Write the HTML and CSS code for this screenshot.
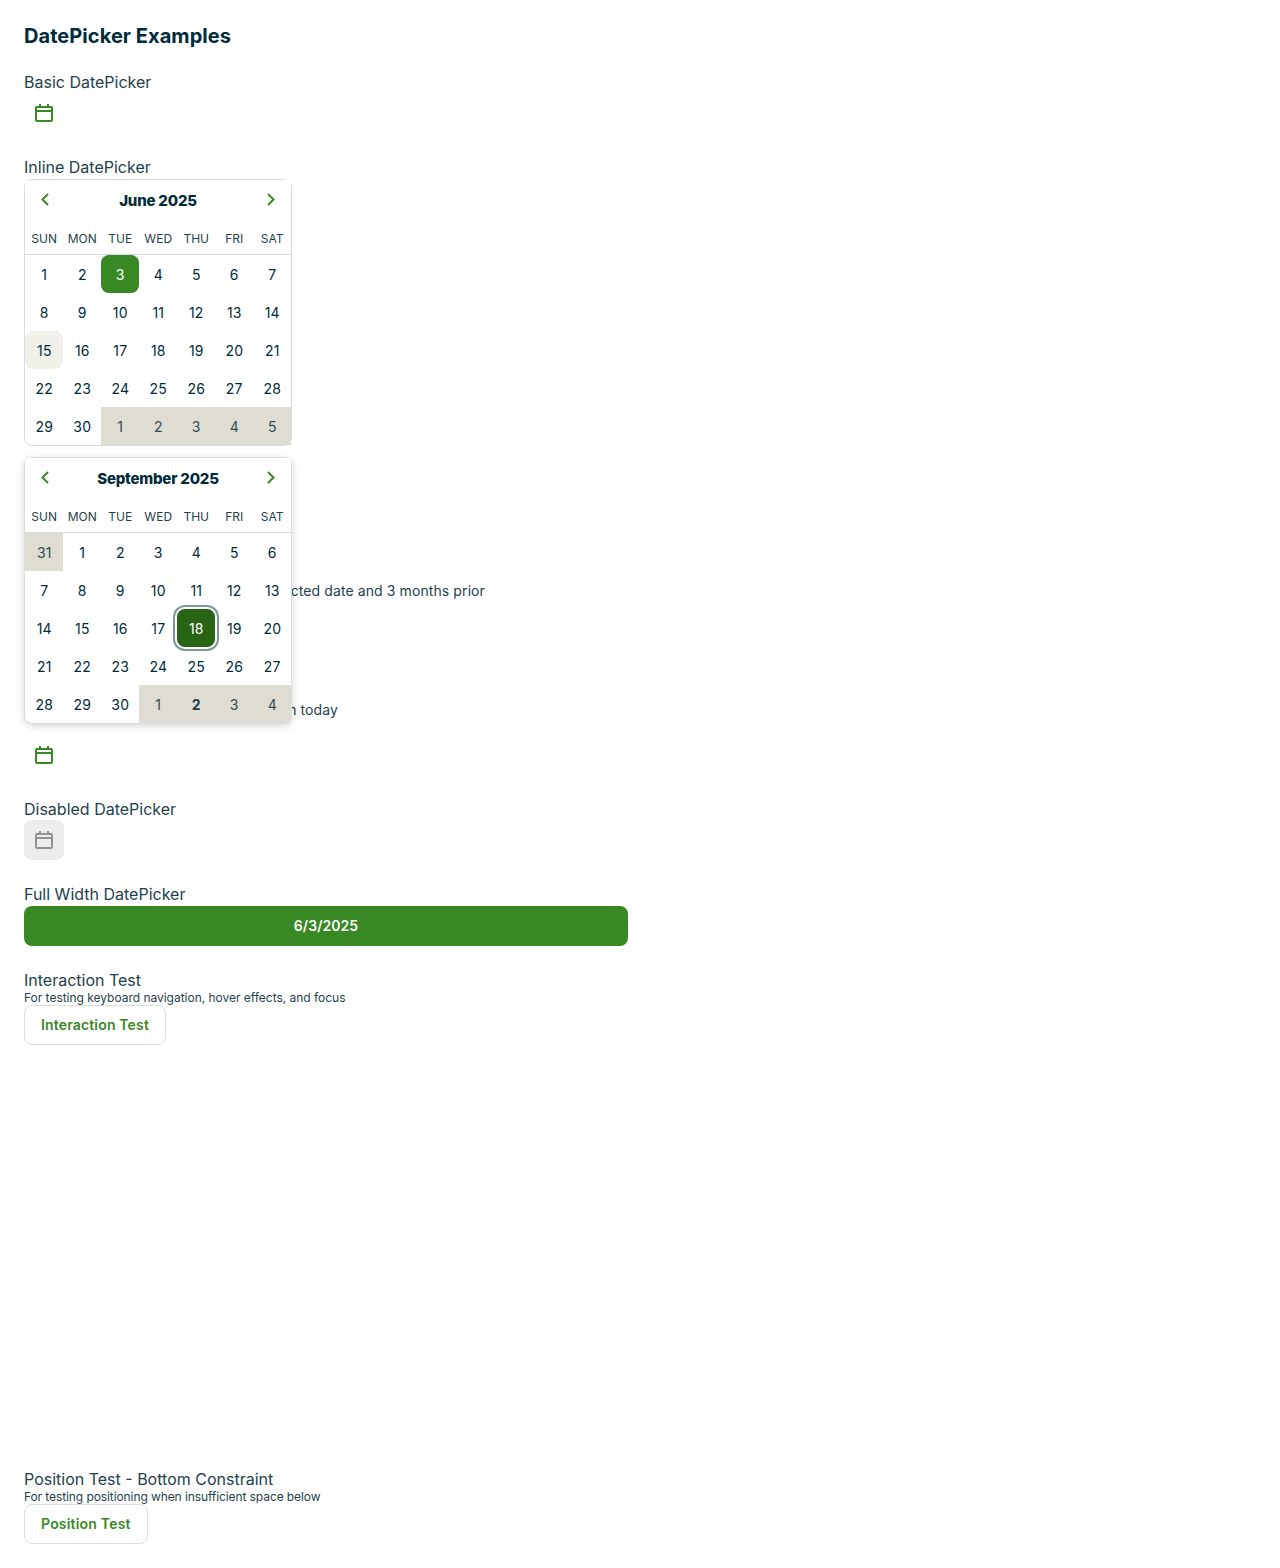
FILE: index.html
```html
<!DOCTYPE html>
<html lang="en">
<head>
<meta charset="utf-8">
<title>DatePicker Examples</title>
<link rel="stylesheet" href="styles.css">
</head>
<body>
<svg class="sprite" aria-hidden="true">
  <symbol id="calendar" viewBox="0 0 24 24"><g fill="none" stroke="currentColor" stroke-width="2"><rect x="4" y="6" width="16" height="14" rx="1"/><path d="M4 10h16M8 3v3M16 3v3"/></g></symbol>
  <symbol id="chevron" viewBox="0 0 24 24"><path fill="none" stroke="currentColor" stroke-width="2" d="M15 6 9.5 11.5 15 17"/></symbol>
</svg>
<main class="page">
  <h1 class="title">DatePicker Examples</h1>
  <section class="example">
    <div class="label">Basic DatePicker</div>
    <button class="icon-button" aria-label="Choose date"><svg class="icon"><use href="#calendar"/></svg></button>
  </section>
  <section class="example inline-example">
    <div class="label">Inline DatePicker</div>
    <div class="calendar" data-month="June 2025" data-prev="0" data-selected="3" data-hover="15"></div>
  </section>
  <section class="example range-example">
    <p class="description range-text">Only allows selection between the selected date and 3 months prior</p>
    <button class="icon-button" aria-label="Choose date"><svg class="icon"><use href="#calendar"/></svg></button>
  </section>
  <section class="example future-example">
    <p class="description future-text">Only allows dates starting from today</p>
    <button class="icon-button" aria-label="Choose date"><svg class="icon"><use href="#calendar"/></svg></button>
    <div class="calendar popover" data-month="September 2025" data-prev="1" data-focused="18" data-today="2"></div>
  </section>
  <section class="example">
    <div class="label">Disabled DatePicker</div>
    <button class="icon-button disabled" disabled aria-label="Choose date"><svg class="icon"><use href="#calendar"/></svg></button>
  </section>
  <section class="example">
    <div class="label">Full Width DatePicker</div>
    <button class="button primary">6/3/2025</button>
  </section>
  <section class="example">
    <div class="label">Interaction Test</div>
    <p class="caption">For testing keyboard navigation, hover effects, and focus</p>
    <button class="button outline">Interaction Test</button>
  </section>
  <section class="example bottom-example">
    <div class="label">Position Test - Bottom Constraint</div>
    <p class="caption">For testing positioning when insufficient space below</p>
    <button class="button outline">Position Test</button>
  </section>
</main>
<script src="calendar.js"></script>
</body>
</html>
```
FILE: styles.css
```css
* { box-sizing: border-box; }
body { margin: 0; background: #fff; color: #253f4c; font-family: Inter, sans-serif; }
button { font: inherit; padding: 0; border: 0; background: none; }
p { margin: 0; }
.sprite { display: none; }
.page { display: flex; flex-direction: column; width: 652px; height: 1568px; padding: 24px; }
.title { margin: 0 0 24px; font-size: 20px; line-height: 24px; font-weight: 700; color: #002b3a; letter-spacing: .06px; }
.example { display: flex; flex-direction: column; align-items: flex-start; margin-bottom: 24px; }
.label { font-size: 16px; line-height: 21.4px; white-space: nowrap; }
.icon-button { display: grid; place-items: center; width: 40px; height: 40px; border-radius: 8px; color: #388823; }
.icon { display: block; width: 24px; height: 24px; }
.disabled { color: #929292; background: #ededed; }
.description { font-size: 14px; line-height: 20px; letter-spacing: .1px; text-align: right; white-space: nowrap; }
.caption { font-size: 12px; line-height: 14px; letter-spacing: -.02px; white-space: nowrap; }
.button { height: 40px; border-radius: 8px; padding: 0 16px 2px; font-size: 14px; font-weight: 600; letter-spacing: .16px; }
.primary { width: 100%; padding-bottom: 0; letter-spacing: .05px; color: #fff; background: #388823; }
.outline { border: 1px solid #d8dee0; color: #388823; background: #fff; }
.inline-example { height: 289px; flex: none; margin-bottom: 0; }
.range-example { height: 227.4px; flex: none; justify-content: flex-end; margin: 0; }
.range-text { width: 461px; margin-bottom: 32.4px; }
.future-example { position: relative; height: 101px; flex: none; justify-content: flex-end; }
.future-text { width: 314px; margin-bottom: 15px; }
.bottom-example { margin: auto 0 0; }
.bottom-example .caption { letter-spacing: -.09px; }
.bottom-example .button { letter-spacing: .2px; }
.calendar { width: 268px; height: 267px; border: 1px solid #d6dde0; border-radius: 8px; background: #fff; color: #002b3a; }
.popover { position: absolute; left: 0; top: -216.6px; box-shadow: 0 2px 8px rgba(0,0,0,.16); z-index: 1; }
.month-header { display: flex; align-items: center; justify-content: space-between; height: 40px; padding: 0 8px; border-radius: 5px; background: #fff; }
.month-title { padding-top: 2px; font-size: 15px; line-height: 20px; font-weight: 800; letter-spacing: -.2px; }
.chevron-button { display: block; width: 24px; height: 24px; color: #388823; }
.next { transform: scaleX(-1); }
.weekdays, .days { display: grid; grid-template-columns: repeat(7, 38px); }
.weekdays { height: 35px; border-bottom: 1px solid #d6dde0; font-size: 12px; line-height: 38px; text-align: center; color: #253f4c; }
.weekdays span { padding-left: .4px; }
.day { width: 38px; height: 38px; padding-left: .6px; font-size: 14px; line-height: 40px; text-align: center; letter-spacing: .2px; }
.outside { background: #dfdcd1; color: #334c58; }
.today { font-weight: 700; color: #253f4c; }
.selected { border-radius: 8px; background: #388823; color: #fff; }
.hover { border-radius: 8px; background: #f1f0e9; }
.focused { border-radius: 8px; background: #276414; color: #fff; box-shadow: 0 0 0 2px #fff, 0 0 0 4px #8095a0; }
```
FILE: calendar.js
```js
document.querySelectorAll('.calendar').forEach(function (calendar) {
  const data = calendar.dataset;
  const previousDays = Number(data.prev);
  let cells = '';
  for (let i = 0; i < 35; i++) {
    const offset = i - previousDays;
    const outside = offset < 0 || offset >= 30;
    const number = offset < 0 ? 32 + offset : offset % 30 + 1;
    let classes = outside ? 'day outside' : 'day';
    if (!outside && number === Number(data.selected)) classes += ' selected';
    if (!outside && number === Number(data.hover)) classes += ' hover';
    if (!outside && number === Number(data.focused)) classes += ' focused';
    if (outside && number === Number(data.today)) classes += ' today';
    cells += `<span class="${classes}">${number}</span>`;
  }
  const weekdays = ['SUN', 'MON', 'TUE', 'WED', 'THU', 'FRI', 'SAT'].map(day => `<span>${day}</span>`).join('');
  const chevron = '<svg class="icon"><use href="#chevron"/></svg>';
  calendar.innerHTML = `<div class="month-header"><button class="chevron-button" aria-label="Previous month">${chevron}</button><span class="month-title">${data.month}</span><button class="chevron-button next" aria-label="Next month">${chevron}</button></div><div class="weekdays">${weekdays}</div><div class="days">${cells}</div>`;
});
```
